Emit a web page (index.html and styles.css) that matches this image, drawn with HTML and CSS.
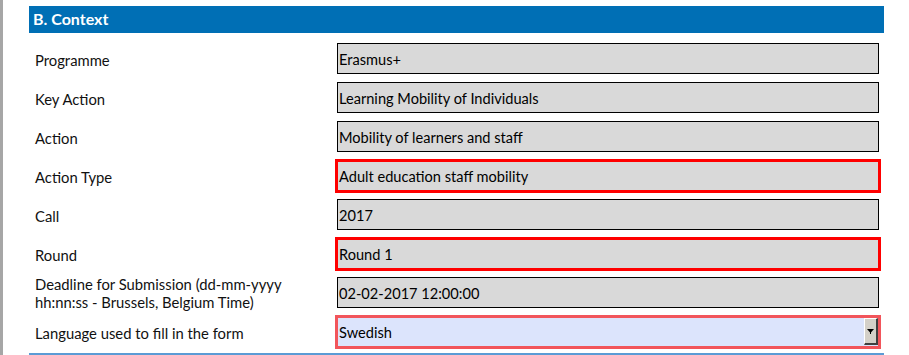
FILE: index.html
```html
<!DOCTYPE html>
<html lang="en">
<head>
<meta charset="utf-8">
<title>B. Context</title>
<link rel="stylesheet" href="styles.css">
</head>
<body>
<div class="page">
  <section class="context">
    <h2 class="head">B. Context</h2>
    <div class="rows">
      <div class="row"><div class="label">Programme</div><div class="field">Erasmus+</div></div>
      <div class="row"><div class="label">Key Action</div><div class="field">Learning Mobility of Individuals</div></div>
      <div class="row"><div class="label">Action</div><div class="field">Mobility of learners and staff</div></div>
      <div class="row"><div class="label">Action Type</div><div class="field err">Adult education staff mobility</div></div>
      <div class="row"><div class="label">Call</div><div class="field">2017</div></div>
      <div class="row"><div class="label">Round</div><div class="field err">Round 1</div></div>
      <div class="row"><div class="label two"><span class="line">Deadline for Submission (dd-mm-yyyy</span><span class="line">hh:nn:ss - Brussels, Belgium Time)</span></div><div class="field">02-02-2017 12:00:00</div></div>
      <div class="row last"><div class="label">Language used to fill in the form</div>
        <div class="select"><span class="sel-text">Swedish</span>
          <span class="sel-btn"><svg width="7" height="5" viewBox="0 0 7 5"><polygon points="0,0 7,0 3.5,4" fill="#000"/><rect x="3" y="3" width="1" height="2" fill="#000"/></svg></span>
        </div>
      </div>
    </div>
  </section>
</div>
</body>
</html>
```

FILE: styles.css
```css
html, body {
  margin: 0;
  padding: 0;
  background: #ffffff;
}
body {
  font-family: Lato, "Liberation Sans", sans-serif;
  color: #111111;
  overflow: hidden;
}
.page {
  border-left: 3px solid #a6a6a6;
  height: 355px;
  box-sizing: border-box;
  padding: 6px 0 0 26px;
}
.context {
  width: 855px;
}
.head {
  margin: 0;
  height: 27px;
  background: #006fb5;
  color: #ffffff;
  font-size: 16px;
  font-weight: 700;
  line-height: 26px;
  padding-left: 4px;
}
.rows {
  padding-top: 10px;
  border-bottom: 2px solid #5b9bd5;
}
.row {
  display: flex;
  align-items: center;
  height: 31px;
  margin-bottom: 8px;
}
.row.last {
  margin-bottom: 6px;
}
.label {
  width: 302px;
  padding-left: 6px;
  flex: none;
  font-size: 14.8px;
  line-height: 18px;
  padding-top: 2px;
}
.label.two {
  display: flex;
  flex-direction: column;
  padding-top: 0;
}
.line {
  display: block;
  height: 18px;
  line-height: 18px;
}
.field {
  box-sizing: border-box;
  width: 542px;
  height: 31px;
  flex: none;
  border: 1px solid #000000;
  background: #d9d9d9;
  color: #000000;
  font-size: 14.6px;
  padding-left: 1px;
  padding-top: 1px;
  display: flex;
  align-items: center;
}
.field.err {
  width: 546px;
  height: 34px;
  margin-left: -2px;
  border: 3px solid #ff0000;
}
.select {
  box-sizing: border-box;
  width: 546px;
  height: 34px;
  margin-left: -2px;
  flex: none;
  border: 3px solid #f2555b;
  background: #dce4fc;
  color: #000000;
  font-size: 14.6px;
  padding-left: 1px;
  display: flex;
  align-items: center;
  justify-content: space-between;
}
.sel-text {
  padding-top: 1px;
}
.sel-btn {
  box-sizing: border-box;
  width: 14px;
  height: 27px;
  background: #d4d0c8;
  border-top: 1px solid #ffffff;
  border-left: 1px solid #ffffff;
  border-right: 2px solid #404040;
  border-bottom: 2px solid #404040;
  display: flex;
  align-items: center;
  justify-content: center;
}
.sel-btn svg {
  display: block;
}
```
